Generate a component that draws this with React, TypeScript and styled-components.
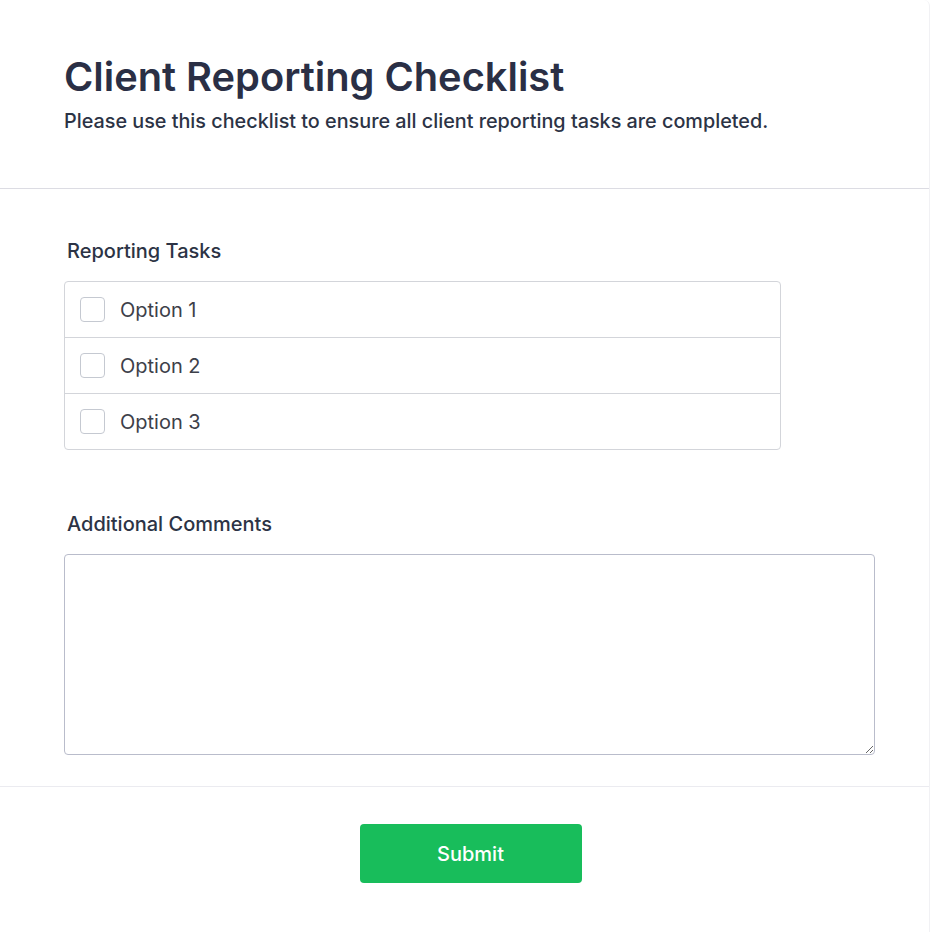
import styled, { createGlobalStyle } from "styled-components"

const GlobalStyle = createGlobalStyle`
  html, body {
    margin: 0;
    padding: 0;
    background: #ffffff;
  }
  body {
    font-family: Inter, "Noto Sans", sans-serif;
    color: #2c3345;
  }
  * {
    box-sizing: border-box;
  }
`

const Card = styled.div`
  width: 930px;
  min-height: 932px;
  background: #ffffff;
  border-right: 1px solid #f1f1f4;
  border-top-right-radius: 6px;
`

const Header = styled.header`
  padding: 53px 64px 53px;
  border-bottom: 1px solid #dcdce3;
`

const Title = styled.h1`
  margin: 0;
  font-size: 39.8px;
  line-height: 48px;
  font-weight: 600;
  color: #2a2f45;
`

const Subtitle = styled.p`
  margin: 6px 0 0;
  font-size: 19.8px;
  line-height: 28px;
  font-weight: 500;
  color: #2c3345;
`

const Body = styled.section`
  padding: 49px 64px 31px;
  border-bottom: 1px solid #ebebf0;
  display: flex;
  flex-direction: column;
  gap: 61px;
`

const Field = styled.div`
  display: flex;
  flex-direction: column;
`

const Label = styled.label`
  font-size: 20px;
  line-height: 26px;
  font-weight: 500;
  color: #2c3345;
  padding-left: 3px;
  margin-bottom: 17px;
`

const OptionList = styled.div`
  width: 717px;
  border: 1px solid #d3d5da;
  border-radius: 4px;
  display: flex;
  flex-direction: column;
`

const OptionRow = styled.label<{ $last?: boolean }>`
  display: flex;
  align-items: center;
  gap: 15px;
  height: ${p => (p.$last ? "55px" : "56px")};
  padding: 0 15px;
  border-bottom: ${p => (p.$last ? "none" : "1px solid #d3d5da")};
  font-size: 20px;
  color: #3d4049;
  cursor: pointer;
`

const Box = styled.span`
  width: 25px;
  height: 25px;
  border: 1px solid #c5c9d1;
  border-radius: 4px;
  background: #ffffff;
  flex-shrink: 0;
`

const TextArea = styled.textarea`
  width: 811px;
  height: 201px;
  border: 1px solid #b9bccb;
  border-radius: 4px;
  padding: 10px 12px;
  font-family: Inter, sans-serif;
  font-size: 16px;
  color: #2c3345;
  resize: vertical;
  outline: none;
`

const Footer = styled.footer`
  display: flex;
  justify-content: center;
  padding: 37px 0 37px 12px;
`

const SubmitButton = styled.button`
  width: 222px;
  height: 59px;
  border: none;
  border-radius: 4px;
  background: #18bd5b;
  color: #ffffff;
  font-family: Inter, sans-serif;
  font-size: 20px;
  font-weight: 500;
  cursor: pointer;
`

const options = ["Option 1", "Option 2", "Option 3"]

const App = (): JSX.Element => {
  return (
    <Card>
      <GlobalStyle />
      <Header>
        <Title>Client Reporting Checklist</Title>
        <Subtitle>Please use this checklist to ensure all client reporting tasks are completed.</Subtitle>
      </Header>

      <Body>
        <Field>
          <Label>Reporting Tasks</Label>
          <OptionList>
            {options.map((o, i) => (
              <OptionRow key={o} $last={i === options.length - 1}>
                <Box />
                {o}
              </OptionRow>
            ))}
          </OptionList>
        </Field>

        <Field>
          <Label>Additional Comments</Label>
          <TextArea />
        </Field>
      </Body>

      <Footer>
        <SubmitButton>Submit</SubmitButton>
      </Footer>
    </Card>
  )
}

export default App
